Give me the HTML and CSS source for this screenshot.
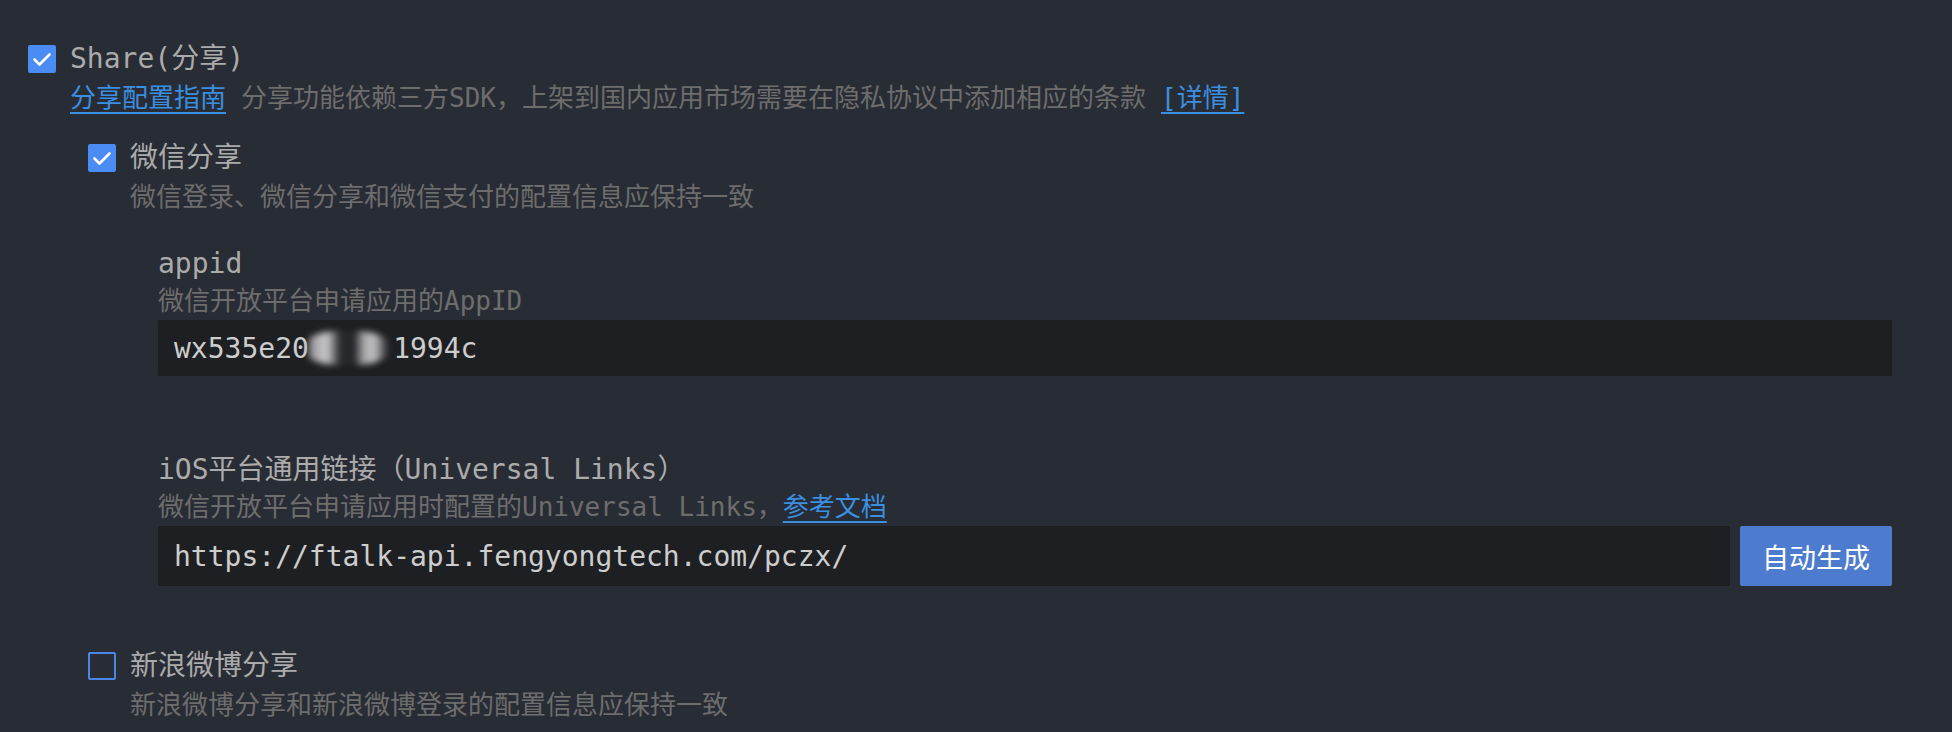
FILE: index.html
```html
<!DOCTYPE html>
<html lang="zh-CN">
<head>
<meta charset="utf-8">
<title>Share</title>
<link rel="stylesheet" href="styles.css">
</head>
<body>
<div class="page">
  <section class="group">
    <div class="check-row">
      <span class="checkbox checked"><svg viewBox="0 0 28 28" width="28" height="28"><polyline points="6.5,14.5 11.5,19.5 21.5,9.5" fill="none" stroke="#fff" stroke-width="2.6" stroke-linecap="round" stroke-linejoin="round"/></svg></span>
      <span class="title">Share(分享)</span>
    </div>
    <div class="desc"><a class="link">分享配置指南</a><span class="desc-gap">分享功能依赖三方SDK，上架到国内应用市场需要在隐私协议中添加相应的条款</span><a class="link detail">[详情]</a></div>

    <section class="sub">
      <div class="check-row">
        <span class="checkbox checked"><svg viewBox="0 0 28 28" width="28" height="28"><polyline points="6.5,14.5 11.5,19.5 21.5,9.5" fill="none" stroke="#fff" stroke-width="2.6" stroke-linecap="round" stroke-linejoin="round"/></svg></span>
        <span class="title">微信分享</span>
      </div>
      <div class="desc">微信登录、微信分享和微信支付的配置信息应保持一致</div>

      <div class="fields">
        <div class="field">
          <div class="field-title">appid</div>
          <div class="field-desc">微信开放平台申请应用的AppID</div>
          <div class="input">wx535e20<span class="redact"></span>1994c</div>
        </div>
        <div class="field">
          <div class="field-title">iOS平台通用链接（Universal Links）</div>
          <div class="field-desc">微信开放平台申请应用时配置的Universal Links，<a class="link">参考文档</a></div>
          <div class="input-row">
            <div class="input">https://ftalk-api.fengyongtech.com/pczx/</div>
            <button class="btn">自动生成</button>
          </div>
        </div>
      </div>
    </section>

    <section class="sub sub-last">
      <div class="check-row">
        <span class="checkbox unchecked"></span>
        <span class="title">新浪微博分享</span>
      </div>
      <div class="desc">新浪微博分享和新浪微博登录的配置信息应保持一致</div>
    </section>
  </section>
</div>
</body>
</html>
```

FILE: styles.css
```css
html, body {
  margin: 0;
  padding: 0;
  background: #282c34;
  height: 100%;
  overflow: hidden;
}

.page {
  padding: 45px 60px 0 28px;
  font-family: "DejaVu Sans Mono", "Noto Sans CJK SC", monospace;
}

.check-row {
  display: flex;
  align-items: center;
  gap: 14px;
  height: 28px;
}

.checkbox {
  width: 28px;
  height: 28px;
  box-sizing: border-box;
  border-radius: 2px;
  flex: none;
  display: block;
}

.checkbox svg {
  display: block;
}

.checkbox.checked {
  background: #4b8bf4;
}

.checkbox.unchecked {
  border: 2px solid #4a86e8;
}

.title {
  font-size: 28px;
  line-height: 28px;
  color: #ababab;
  white-space: nowrap;
}

.desc {
  margin: 7px 0 0 42px;
  font-size: 26px;
  line-height: 36px;
  color: #6d6d6d;
  white-space: nowrap;
}

.link {
  color: #3b8fe0;
  text-decoration: underline;
  text-underline-offset: 5px;
  text-decoration-thickness: 2px;
  cursor: pointer;
}

.desc-gap {
  margin-left: 15px;
}

.detail {
  margin-left: 15px;
}

.sub {
  margin: 28px 0 0 60px;
}

.sub-last {
  margin-top: 66px;
}

.fields {
  margin-left: 70px;
  padding-top: 31px;
}

.field + .field {
  margin-top: 76px;
}

.field-title {
  font-size: 28px;
  line-height: 36px;
  color: #ababab;
  white-space: nowrap;
}

.field-desc {
  margin-top: 1px;
  font-size: 26px;
  line-height: 36px;
  color: #6d6d6d;
  white-space: nowrap;
}

.input {
  margin-top: 1px;
  height: 56px;
  box-sizing: border-box;
  padding: 0 16px;
  background: #1e1f23;
  border-radius: 2px;
  font-size: 28px;
  color: #cdcdcd;
  display: flex;
  align-items: center;
  white-space: nowrap;
}

.redact {
  display: inline-block;
  width: 5ch;
  height: 34px;
  margin-left: -4px;
  margin-right: 4px;
  background: linear-gradient(90deg, rgba(150,150,152,0) 0%, #a4a4a6 10%, #c8c8ca 26%, #2a2b2f 42%, #232428 58%, #a8a8aa 70%, #c2c2c4 82%, rgba(150,150,152,0) 100%);
  filter: blur(3px);
  border-radius: 40%;
}

.input-row {
  margin-top: 1px;
  display: flex;
  gap: 10px;
  height: 60px;
}

.input-row .input {
  flex: 1;
  height: auto;
  margin-top: 0;
}

.btn {
  width: 152px;
  flex: none;
  border: none;
  border-radius: 2px;
  background: #4d7bcd;
  color: #ffffff;
  font-family: "Noto Sans CJK SC", sans-serif;
  font-size: 27px;
  padding: 0;
  cursor: pointer;
}
```
